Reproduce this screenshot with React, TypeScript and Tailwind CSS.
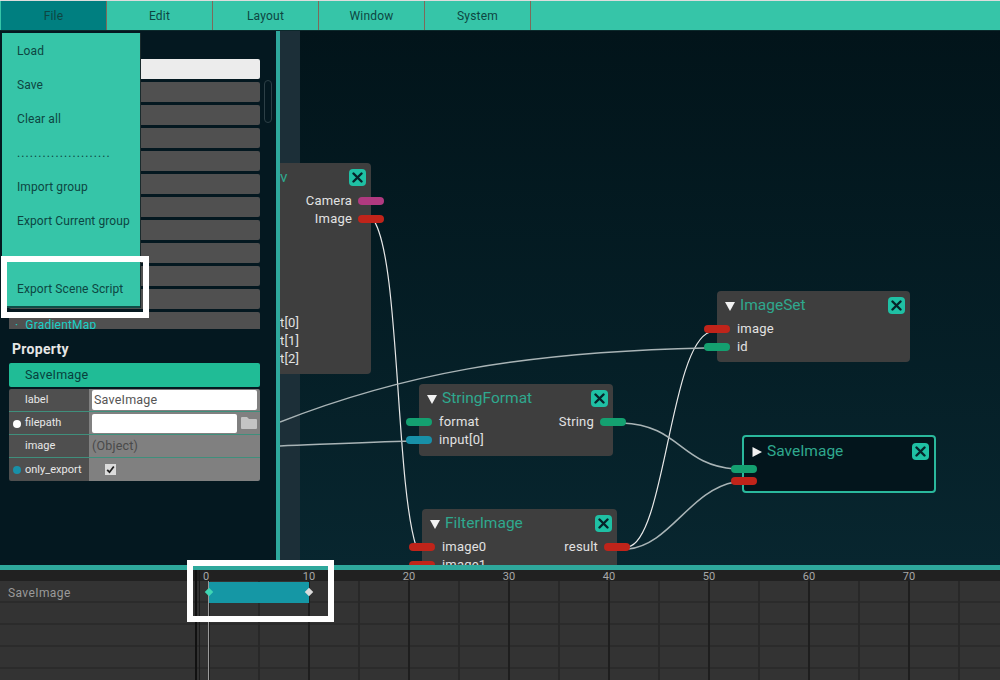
import React from 'react';

const fontStack = { fontFamily: 'Roboto, "Noto Sans", sans-serif' };

const menus = ['File', 'Edit', 'Layout', 'Window', 'System'];
const fileItems = ['Load', 'Save', 'Clear all', '......................', 'Import group', 'Export Current group', '......................', 'Export Scene Script'];
const ticks = [0, 10, 20, 30, 40, 50, 60, 70, 80];

const pillColors = {
  red: 'bg-[#c0241a]',
  green: 'bg-[#14a070]',
  blue: 'bg-[#1890a8]',
  pink: 'bg-[#b03a80]',
};

type PillColor = keyof typeof pillColors;

const CloseButton: React.FC = () => (
  <div className="ml-auto flex h-[17px] w-[17px] flex-none items-center justify-center rounded-[4px] bg-[#1fc0a4]">
    <svg width="11" height="11" viewBox="0 0 11 11">
      <path d="M1.5 1.5 L9.5 9.5 M9.5 1.5 L1.5 9.5" stroke="#06232a" strokeWidth="2.4" strokeLinecap="round" />
    </svg>
  </div>
);

const Triangle: React.FC<{ open?: boolean }> = ({ open = true }) => (
  <svg className="flex-none" width="10" height="10" viewBox="0 0 10 10">
    <path d={open ? 'M0 1 H10 L5 10 Z' : 'M0.5 0 L10 5 L0.5 10 Z'} fill="#f2f2f2" />
  </svg>
);

// one row of a node, with an optional port on either side
const Port: React.FC<{
  left?: string;
  leftColor?: PillColor;
  right?: string;
  rightColor?: PillColor;
  small?: boolean;
}> = ({ left, leftColor, right, rightColor, small }) => (
  <div className={`flex items-center text-[13px] tracking-[0.2px] text-[#e2e2e2] ${small ? 'h-[12px]' : 'h-[18px]'}`}>
    {leftColor && <div className={`-ml-[13px] mr-[7px] h-[8px] w-[26px] flex-none rounded-full ${pillColors[leftColor]}`} />}
    {left && <span>{left}</span>}
    {right && <span className="ml-auto">{right}</span>}
    {rightColor && <div className={`-mr-[13px] ml-[6px] h-[8px] w-[26px] flex-none rounded-full ${pillColors[rightColor]}`} />}
  </div>
);

const Node: React.FC<{
  title: string;
  className: string;
  open?: boolean;
  selected?: boolean;
  children: React.ReactNode;
}> = ({ title, className, open = true, selected, children }) => (
  <div className={`absolute flex flex-col rounded-[4px] ${selected ? 'border-2 border-[#2ab89c] bg-[#03151c]' : 'bg-[#3e3e3e]'} ${className}`}>
    <div className="flex h-[29px] flex-none items-center gap-[5px] pl-[8px] pr-[5px]">
      <Triangle open={open} />
      <span className="text-[15.5px] text-[#2fa88e]">{title}</span>
      <CloseButton />
    </div>
    {children}
  </div>
);

const NodeCanvas: React.FC = () => (
  <div className="relative flex-1 overflow-hidden bg-gradient-to-b from-[#02141a] to-[#08262f]">
    {/* lighter band next to the splitter */}
    <div className="absolute left-0 top-0 h-full w-[20px] bg-[#1c2f38]" />

    <svg className="absolute left-0 top-0" width="720" height="534" viewBox="280 31 720 534" fill="none">
      <path d="M372 218 C400 250 395 480 416 546" stroke="#e8e8e8" strokeWidth="1.2" />
      <path d="M628 547 C665 540 670 345 710 332" stroke="#e8e8e8" strokeWidth="1.2" />
      <path d="M280 422 C400 375 520 352 705 348" stroke="#a9b4b6" strokeWidth="1.5" />
      <path d="M280 446 C330 444 370 442 412 441" stroke="#a9b4b6" strokeWidth="1.5" />
      <path d="M622 423 C680 425 680 465 735 469" stroke="#a9b4b6" strokeWidth="1.5" />
      <path d="M628 549 C670 545 690 490 735 482" stroke="#a9b4b6" strokeWidth="1.5" />
    </svg>

    {/* node cut by the splitter */}
    <div className="absolute left-0 top-[132px] flex h-[211px] w-[91px] flex-col rounded-r-[4px] bg-[#3e3e3e]">
      <div className="flex h-[29px] flex-none items-center pr-[5px] text-[15.5px] text-[#2fa88e]">
        <span>v</span>
        <CloseButton />
      </div>
      <Port right="Camera" rightColor="pink" />
      <Port right="Image" rightColor="red" />
      <div className="h-[86px] flex-none" />
      <Port left="t[0]" />
      <Port left="t[1]" />
      <Port left="t[2]" />
    </div>

    <Node title="StringFormat" className="left-[139px] top-[353px] h-[72px] w-[194px]">
      <Port left="format" leftColor="green" right="String" rightColor="green" />
      <Port left="input[0]" leftColor="blue" />
    </Node>

    <Node title="FilterImage" className="left-[142px] top-[478px] h-[72px] w-[195px]">
      <Port left="image0" leftColor="red" right="result" rightColor="red" />
      <Port left="image1" leftColor="red" />
    </Node>

    <Node title="ImageSet" className="left-[437px] top-[260px] h-[71px] w-[193px]">
      <Port left="image" leftColor="red" />
      <Port left="id" leftColor="green" />
    </Node>

    <Node title="SaveImage" open={false} selected className="left-[462px] top-[404px] h-[58px] w-[194px]">
      <div className="-mt-[3px]">
        <Port small leftColor="green" />
        <Port small leftColor="red" />
      </div>
    </Node>
  </div>
);

const PropertyRow: React.FC<{ dot?: string; name: string; border?: boolean; children?: React.ReactNode }> = ({ dot, name, border = true, children }) => (
  <div className={`flex h-[23px] ${border ? 'border-b border-[#3f8f7c]' : ''}`}>
    <div className="relative flex w-[80px] items-center bg-[#4f4f4f] pl-[16px] pt-[1px] text-[11px] text-[#e8e8e8]">
      {dot && <span className={`absolute left-[4px] h-[8px] w-[8px] rounded-full ${dot}`} />}
      {name}
    </div>
    <div className="flex flex-1 items-center gap-[4px] bg-[#808080] px-[3px]">{children}</div>
  </div>
);

const Sidebar: React.FC = () => (
  <div className="flex w-[276px] flex-col bg-[#041820] pl-[9px]">
    <div className="relative h-[298px] flex-none overflow-hidden pt-[28px]">
      <div className="flex w-[251px] flex-col gap-[3px]">
        <div className="h-[20px] rounded-[2px] bg-[#ececec]" />
        {Array.from({ length: 10 }).map((_, i) => (
          <div key={i} className="h-[20px] rounded-[2px] bg-[#505050]" />
        ))}
        <div className="flex h-[20px] gap-[7px] rounded-[2px] bg-[#505050] pl-[6px] pt-[2px] text-[12px] leading-[22px] tracking-[0.2px] text-[#18d0c8]">
          <span>·</span>
          <span>GradientMap</span>
        </div>
      </div>
      <div className="absolute left-[255px] top-[49px] h-[43px] w-[8px] rounded-full border border-[#2c3f46]" />
    </div>
    <div className="pl-[3px] pt-[11px] text-[14px] font-bold leading-[18px] tracking-[0.3px] text-[#e6e6e6]">Property</div>
    <div className="mt-[5px] flex h-[24px] w-[251px] items-center rounded-[2px] bg-[#20bc96] pl-[16px] pt-[1px] text-[12.5px] tracking-[0.2px] text-[#07403c]">SaveImage</div>
    <div className="mt-[2px] w-[251px] overflow-hidden rounded-[2px]">
      <PropertyRow name="label">
        <div className="flex h-[20px] w-[165px] items-center rounded-[2px] bg-white px-[2px] pt-[1px] text-[12.5px] tracking-[0.2px] text-[#555]">SaveImage</div>
      </PropertyRow>
      <PropertyRow dot="bg-white" name="filepath">
        <div className="h-[19px] w-[145px] rounded-[2px] bg-white" />
        <svg width="16" height="14" viewBox="0 0 16 14">
          <path d="M0 2 Q0 1 1 1 H6 L8 3 H15 Q16 3 16 4 V12 Q16 13 15 13 H1 Q0 13 0 12 Z" fill="#c4c4c4" />
        </svg>
      </PropertyRow>
      <PropertyRow name="image">
        <span className="pt-[1px] text-[12.5px] tracking-[0.2px] text-[#4a4a4a]">(Object)</span>
      </PropertyRow>
      <PropertyRow dot="bg-[#1890a8]" name="only_export" border={false}>
        <div className="ml-[13px] flex h-[11px] w-[11px] items-center justify-center bg-[#dcdcdc]">
          <svg width="9" height="9" viewBox="0 0 9 9">
            <path d="M1.2 4.8 L3.5 7.2 L7.8 1.5" stroke="#222" strokeWidth="1.8" fill="none" />
          </svg>
        </div>
      </PropertyRow>
    </div>
  </div>
);

const Timeline: React.FC = () => (
  <div className="relative h-[110px] overflow-hidden bg-[#333333]">
    <div className="flex h-[11px] bg-[#212121] pl-[159px]">
      {ticks.map((tick, i) => (
        <span key={tick} className={`w-[100px] flex-none text-center text-[11px] leading-[13px] text-[#a8a8a8] ${i === 0 ? 'pr-[6px]' : ''}`}>
          {tick}
        </span>
      ))}
    </div>
    <div className="flex h-[22px] items-center border-b-2 border-[#2b2b2b] pl-[8px] pt-[3px] text-[12px] tracking-[0.4px] text-[#9a9a9a]">SaveImage</div>
    <div className="h-[22px] border-b-2 border-[#2b2b2b]" />
    <div className="h-[22px] border-b-2 border-[#2b2b2b]" />
    <div className="h-[22px] border-b-2 border-[#2b2b2b]" />

    {/* vertical grid lines, a strong one every ten frames */}
    <div className="absolute bottom-0 left-[195px] top-0 w-[2px] bg-[#111]" />
    <div className="absolute bottom-0 left-[199px] top-0 w-px bg-[#1c1c1c]" />
    <div className="absolute bottom-0 left-[208px] top-[11px] flex">
      {Array.from({ length: 16 }).map((_, i) => (
        <div key={i} className={`h-full w-[50px] flex-none border-l-2 ${i % 2 === 0 ? 'border-[#1e1e1e]' : 'border-[#282828]'}`} />
      ))}
    </div>
    <div className="absolute left-[209px] top-[12px] h-[21px] w-[100px] bg-[#1597a5]" />
    <div className="absolute bottom-0 left-[208px] top-[11px] w-px bg-[#9a9a9a]" />
    <div className="absolute left-[206px] top-[19px] h-[6px] w-[6px] rotate-45 bg-[#3fd6b4]" />
    <div className="absolute left-[306px] top-[19px] h-[6px] w-[6px] rotate-45 bg-[#dcdcdc]" />
  </div>
);

const App: React.FC = () => {
  return (
    <div className="relative flex h-[680px] w-[1000px] flex-col overflow-hidden bg-[#041820]" style={fontStack}>
      {/* Menu bar */}
      <div className="flex h-[31px] flex-none border-t border-[#dddddd] border-b border-b-[#0c2a2c] bg-[#36c5a8] pl-px">
        {menus.map((menu, i) => (
          <div
            key={menu}
            className={`flex h-full w-[106px] items-center justify-center border-r border-[#7d6a5a] pt-[1px] text-[12px] tracking-[0.2px] text-[#0d4642] ${i === 0 ? 'bg-[#007f80]' : ''}`}
          >
            {menu}
          </div>
        ))}
      </div>

      {/* Middle area */}
      <div className="flex min-h-0 flex-1">
        <Sidebar />
        <div className="w-[4px] bg-[#2ea89c]" />
        <NodeCanvas />
      </div>

      <div className="h-[5px] flex-none bg-[#2ea89c]" />
      <Timeline />

      {/* File dropdown */}
      <div className="absolute left-[2px] top-[33px] flex h-[275px] w-[138px] flex-col border-b-2 border-[#0f4b46] bg-[#36c5a8] pl-[15px] pt-[1px] shadow-[1px_0_0_#1a2a2c]">
        {fileItems.map((item, i) => (
          <div
            key={i}
            className={`flex h-[34px] flex-none items-center whitespace-nowrap text-[12px] text-[#0d4642] ${item.startsWith('.') ? 'tracking-[1.1px]' : 'tracking-[0.1px]'}`}
          >
            {item}
          </div>
        ))}
      </div>

      {/* Tutorial highlights */}
      <div className="absolute left-[1px] top-[256px] h-[62px] w-[148px] border-[6px] border-white" />
      <div className="absolute left-[187px] top-[560px] h-[62px] w-[147px] border-[6px] border-white" />
    </div>
  );
};

export default App;
